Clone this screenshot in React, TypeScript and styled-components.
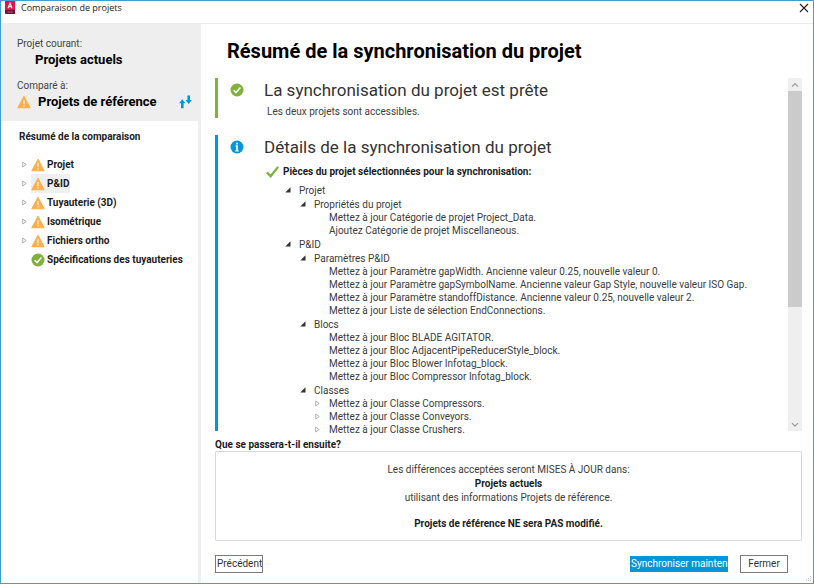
import React, { useState } from "react";
import styled, { createGlobalStyle, css } from "styled-components";

const GlobalStyle = createGlobalStyle`
  * { box-sizing: border-box; }
  body {
    margin: 0;
    background: #fff;
    color: #3c3c3c;
    font-family: "Roboto", "Noto Sans", sans-serif;
    font-size: 10px;
    line-height: 14px;
  }
  button { font: inherit; color: inherit; cursor: pointer; }
  h1, h2, h3, p, ul { margin: 0; padding: 0; }
  ul { list-style: none; }
`;

const Window = styled.div`
  display: flex;
  flex-direction: column;
  height: 100vh;
  border: 1px solid #3f9fd0;
  overflow: hidden;
`;

const TitleBar = styled.header`
  flex: none;
  display: flex;
  align-items: flex-start;
  justify-content: space-between;
  height: 23px;
  padding: 0 4px 0 3px;
  border-bottom: 1px solid #ececec;
`;

const TitleLabel = styled.div`
  display: flex;
  gap: 5px;
  color: #222;
  font-family: "Open Sans", sans-serif;
  font-size: 9px;
  line-height: 14px;
`;

const PlainButton = styled.button`
  display: flex;
  flex: none;
  padding: 0;
  border: 0;
  background: none;
`;

const CloseButton = styled(PlainButton)`
  padding: 2px 0;
`;

const Body = styled.div`
  flex: 1;
  min-height: 0;
  display: flex;
`;

const Sidebar = styled.aside`
  flex: none;
  width: 200px;
  border-right: 3px solid #efefef;
`;

const Comparison = styled.section`
  height: 97px;
  margin-right: -3px;
  padding: 13px 9px 0 16px;
  background: #eee;
`;

const Caption = styled.div`
  height: 14px;
  color: #444;
`;

const ProjectLine = styled.div<{ $last?: boolean }>`
  display: flex;
  align-items: center;
  gap: 7px;
  height: 18px;
  margin-bottom: ${(p) => (p.$last ? 0 : 10)}px;
  padding-left: ${(p) => (p.$last ? 0 : 18)}px;
  color: #000;
  font-size: 13px;
  font-weight: 700;
`;

const SwapButton = styled(PlainButton)`
  margin-left: auto;
`;

const SideHeading = styled.h2`
  width: 121px;
  margin: 8px 0 10px 18px;
  overflow: hidden;
  white-space: nowrap;
  color: #222;
  font-size: 10px;
  font-weight: 700;
  line-height: 16px;
`;

const SideItem = styled.li`
  display: flex;
  align-items: center;
  height: 19px;
  padding-left: 20px;
`;

const Toggle = styled(PlainButton)`
  width: 10px;
  padding-left: 1px;
`;

const SideLink = styled.button<{ $selected?: boolean }>`
  display: flex;
  align-items: center;
  gap: 2px;
  height: 19px;
  padding: 0 1px 0 0;
  border: 0;
  background: ${(p) => (p.$selected ? "#efefef" : "none")};
  color: #1c1c1c;
  font-weight: 700;
  white-space: nowrap;
`;

const Main = styled.main`
  flex: 1;
  min-width: 0;
  display: flex;
  flex-direction: column;
  padding: 0 11px 10px 14px;
`;

const PageTitle = styled.h1`
  flex: none;
  padding: 14px 12px;
  color: #000;
  font-size: 20px;
  font-weight: 700;
  line-height: 26px;
`;

const ScrollFrame = styled.div`
  flex: 1;
  min-height: 0;
  display: flex;
`;

const Report = styled.div`
  flex: 1;
  min-width: 0;
  display: flex;
  flex-direction: column;
  gap: 17px;
  overflow: clip;
  overflow-clip-margin: 6px;
`;

const Panel = styled.section<{ $tone: string; $fill?: boolean }>`
  display: flex;
  flex: ${(p) => (p.$fill ? "1" : "none")};
  min-height: 0;
  gap: 20px;
  padding-left: 12px;
  border-left: 3px solid ${(p) => p.$tone};

  > svg { flex: none; margin-top: 5px; }
`;

const PanelTitle = styled.h2`
  height: 26px;
  color: #333;
  font-size: 17px;
  font-weight: 400;
  line-height: 24px;
`;

const PanelNote = styled.p`
  height: 14px;
  padding-left: 3px;
  line-height: 16px;
`;

const SelectedHeading = styled.h3`
  display: flex;
  align-items: center;
  gap: 4px;
  height: 22px;
  padding-left: 2px;
  color: #1c1c1c;
  font-size: 10px;
  font-weight: 700;
`;

const Tree = styled.ul<{ $root?: boolean }>`
  padding-left: ${(p) => (p.$root ? 19 : 15)}px;
`;

const TreeRow = styled.div<{ $kind: "group" | "leaf" | "closed" }>`
  display: flex;
  align-items: center;
  white-space: nowrap;
  height: ${(p) => (p.$kind === "group" ? 14 : 13)}px;
  line-height: 13px;
  ${(p) => p.$kind === "leaf" && css`padding-left: 16px;`}

  > button { width: 16px; padding-left: 2px; }
`;

const Scrollbar = styled.div`
  flex: none;
  display: flex;
  flex-direction: column;
  width: 14px;
  background: #efefef;
`;

const ScrollButton = styled(PlainButton)`
  justify-content: center;
  align-items: center;
  height: 13px;
`;

const ScrollTrack = styled.div`
  flex: 1;
`;

const ScrollThumb = styled.div`
  height: 66%;
  background: #cbcbcb;
`;

const NextHeading = styled.h3`
  flex: none;
  height: 20px;
  color: #1c1c1c;
  font-size: 10px;
  font-weight: 700;
  line-height: 28px;
`;

const Outcome = styled.section`
  flex: none;
  margin-bottom: 14px;
  padding: 11px 10px 9px;
  border: 1px solid #d8d8d8;
  border-radius: 1px;
  text-align: center;

  strong { color: #1c1c1c; }
  p + p { margin-top: 12px; }
`;

const Actions = styled.footer`
  flex: none;
  display: flex;
  gap: 12px;
  padding-right: 14px;
`;

const ActionButton = styled.button<{ $primary?: boolean; $start?: boolean }>`
  width: ${(p) => (p.$primary ? 98 : 48)}px;
  height: ${(p) => (p.$primary ? 16 : 18)}px;
  align-self: center;
  margin-right: ${(p) => (p.$start ? "auto" : 0)};
  padding: 0 1px;
  overflow: hidden;
  white-space: nowrap;
  text-align: ${(p) => (p.$primary ? "left" : "center")};
  border: ${(p) => (p.$primary ? "0" : "1px solid #7a7a7a")};
  background: ${(p) => (p.$primary ? "#0696d7" : "#fff")};
  color: ${(p) => (p.$primary ? "#fff" : "#333")};
`;

const Grip = styled.div`
  position: absolute;
  right: 2px;
  bottom: 2px;
  display: flex;
`;

const Warning = () => (
  <svg width="14" height="14" viewBox="0 0 14 14" aria-hidden="true">
    <path d="M7 1.2 13.2 12.8H.8Z" fill="#fbb04e" stroke="#fbb04e" strokeLinejoin="round" />
    <path d="M7 5v4.2M7 10.2v1.4" stroke="#fff1dc" strokeWidth="1.3" />
  </svg>
);

const CheckBadge = ({ size = 14 }: { size?: number }) => (
  <svg width={size} height={size} viewBox="0 0 14 14" aria-hidden="true">
    <circle cx="7" cy="7" r="6.5" fill="#7fb13b" />
    <path d="m3.7 7.3 2.3 2.3 4.4-5" fill="none" stroke="#fff" strokeWidth="1.5" />
  </svg>
);

const InfoBadge = () => (
  <svg width="14" height="14" viewBox="0 0 14 14" aria-hidden="true">
    <circle cx="7" cy="7" r="6.5" fill="#0696d7" />
    <path d="M7 2.7v1.9M5.6 6H7v4.6M5.4 10.7h3.2" fill="none" stroke="#fff" strokeWidth="1.6" />
  </svg>
);

const CheckMark = () => (
  <svg width="13" height="12" viewBox="0 0 13 12" aria-hidden="true">
    <path d="M.9 6.4 4.6 10.2 12.1.9" fill="none" stroke="#7fb13b" strokeWidth="2.3" />
  </svg>
);

const Collapsed = () => (
  <svg width="5" height="7" viewBox="0 0 5 7" aria-hidden="true">
    <path d="M.7 1v5l3.5-2.5Z" fill="#fff" stroke="#a0a0a0" strokeWidth=".8" />
  </svg>
);

const Expanded = () => (
  <svg width="6" height="6" viewBox="0 0 6 6" aria-hidden="true">
    <path d="M5.5.3v5.2H.3Z" fill="#333" />
  </svg>
);

const Swap = () => (
  <svg width="13" height="14" viewBox="0 0 13 14" aria-hidden="true">
    <path d="M3.3 4.2 6.5 8.2H4.6v5H2v-5H.1Z" fill="#0696d7" />
    <path d="M9.7 9 6.5 5h1.9V.4H11V5h1.9Z" fill="#0696d7" />
  </svg>
);

const AppLogo = () => (
  <svg width="12" height="14" viewBox="0 0 12 14" aria-hidden="true">
    <path d="M1 0h10v13H2L1 12Z" fill="#e51050" />
    <path d="M1 9h10v4H2L1 12Z" fill="#7a0b35" />
    <path d="M4 7.2 6 2l2 5.2M4.7 5.6h2.6" fill="none" stroke="#fff" strokeWidth="1.1" />
    <path d="M3.5 11h5" stroke="#d77b9c" strokeWidth="1" strokeDasharray="1.3 .5" />
  </svg>
);

const CloseIcon = () => (
  <svg width="10" height="10" viewBox="0 0 10 10" aria-hidden="true">
    <path d="m1 1 8 8M9 1 1 9" stroke="#222" strokeWidth="1.1" />
  </svg>
);

const Chevron = ({ down }: { down?: boolean }) => (
  <svg width="8" height="6" viewBox="0 0 8 6" aria-hidden="true">
    <path d={down ? "m1 1.2 3 3 3-3" : "m1 4.6 3-3 3 3"} fill="none" stroke="#999" strokeWidth="1.2" />
  </svg>
);

type TreeNode = { label: string; closed?: boolean; children?: TreeNode[] };

const leaf = (label: string): TreeNode => ({ label });

const changes: TreeNode[] = [
  {
    label: "Projet",
    children: [
      {
        label: "Propriétés du projet",
        children: [
          leaf("Mettez à jour Catégorie de projet Project_Data."),
          leaf("Ajoutez Catégorie de projet Miscellaneous."),
        ],
      },
    ],
  },
  {
    label: "P&ID",
    children: [
      {
        label: "Paramètres P&ID",
        children: [
          leaf("Mettez à jour Paramètre gapWidth. Ancienne valeur 0.25, nouvelle valeur 0."),
          leaf("Mettez à jour Paramètre gapSymbolName. Ancienne valeur Gap Style, nouvelle valeur ISO Gap."),
          leaf("Mettez à jour Paramètre standoffDistance. Ancienne valeur 0.25, nouvelle valeur 2."),
          leaf("Mettez à jour Liste de sélection EndConnections."),
        ],
      },
      {
        label: "Blocs",
        children: [
          leaf("Mettez à jour Bloc BLADE AGITATOR."),
          leaf("Mettez à jour Bloc AdjacentPipeReducerStyle_block."),
          leaf("Mettez à jour Bloc Blower Infotag_block."),
          leaf("Mettez à jour Bloc Compressor Infotag_block."),
        ],
      },
      {
        label: "Classes",
        children: [
          { label: "Mettez à jour Classe Compressors.", closed: true },
          { label: "Mettez à jour Classe Conveyors.", closed: true },
          { label: "Mettez à jour Classe Crushers.", closed: true },
        ],
      },
    ],
  },
];

const Branch = ({ node }: { node: TreeNode }) => {
  const [open, setOpen] = useState(!node.closed);
  const kind = node.children ? "group" : node.closed ? "closed" : "leaf";
  return (
    <li>
      <TreeRow $kind={kind}>
        {kind !== "leaf" && (
          <PlainButton aria-label={node.label} aria-expanded={open} onClick={() => setOpen(!open)}>
            {open ? <Expanded /> : <Collapsed />}
          </PlainButton>
        )}
        {node.label}
      </TreeRow>
      {open && node.children && (
        <Tree>
          {node.children.map((child) => (
            <Branch key={child.label} node={child} />
          ))}
        </Tree>
      )}
    </li>
  );
};

const categories = ["Projet", "P&ID", "Tuyauterie (3D)", "Isométrique", "Fichiers ortho"];
const specs = "Spécifications des tuyauteries";

export default function App() {
  const [selected, setSelected] = useState("P&ID");
  return (
    <>
      <GlobalStyle />
      <Window>
        <TitleBar>
          <TitleLabel>
            <AppLogo />
            Comparaison de projets
          </TitleLabel>
          <CloseButton aria-label="Fermer la fenêtre">
            <CloseIcon />
          </CloseButton>
        </TitleBar>
        <Body>
          <Sidebar>
            <Comparison>
              <Caption>Projet courant:</Caption>
              <ProjectLine>Projets actuels</ProjectLine>
              <Caption>Comparé à:</Caption>
              <ProjectLine $last>
                <Warning />
                Projets de référence
                <SwapButton aria-label="Inverser les projets">
                  <Swap />
                </SwapButton>
              </ProjectLine>
            </Comparison>
            <SideHeading>Résumé de la comparaison</SideHeading>
            <ul>
              {[...categories, specs].map((name) => (
                <SideItem key={name}>
                  {name === specs ? (
                    <Toggle as="span" />
                  ) : (
                    <Toggle aria-label={`Développer ${name}`} aria-expanded={false}>
                      <Collapsed />
                    </Toggle>
                  )}
                  <SideLink $selected={name === selected} onClick={() => setSelected(name)}>
                    {name === specs ? <CheckBadge /> : <Warning />}
                    {name}
                  </SideLink>
                </SideItem>
              ))}
            </ul>
          </Sidebar>
          <Main>
            <PageTitle>Résumé de la synchronisation du projet</PageTitle>
            <ScrollFrame>
              <Report>
                <Panel $tone="#7fb13b">
                  <CheckBadge />
                  <div>
                    <PanelTitle>La synchronisation du projet est prête</PanelTitle>
                    <PanelNote>Les deux projets sont accessibles.</PanelNote>
                  </div>
                </Panel>
                <Panel $tone="#0696d7" $fill>
                  <InfoBadge />
                  <div>
                    <PanelTitle>Détails de la synchronisation du projet</PanelTitle>
                    <SelectedHeading>
                      <CheckMark />
                      Pièces du projet sélectionnées pour la synchronisation:
                    </SelectedHeading>
                    <Tree $root>
                      {changes.map((node) => (
                        <Branch key={node.label} node={node} />
                      ))}
                    </Tree>
                  </div>
                </Panel>
              </Report>
              <Scrollbar>
                <ScrollButton aria-label="Défiler vers le haut">
                  <Chevron />
                </ScrollButton>
                <ScrollTrack>
                  <ScrollThumb />
                </ScrollTrack>
                <ScrollButton aria-label="Défiler vers le bas">
                  <Chevron down />
                </ScrollButton>
              </Scrollbar>
            </ScrollFrame>
            <NextHeading>Que se passera-t-il ensuite?</NextHeading>
            <Outcome>
              <p>
                Les différences acceptées seront MISES À JOUR dans:
                <br />
                <strong>Projets actuels</strong>
                <br />
                utilisant des informations Projets de référence.
              </p>
              <p>
                <strong>Projets de référence NE sera PAS modifié.</strong>
              </p>
            </Outcome>
            <Actions>
              <ActionButton $start>Précédent</ActionButton>
              <ActionButton $primary>Synchroniser maintenant</ActionButton>
              <ActionButton>Fermer</ActionButton>
            </Actions>
          </Main>
        </Body>
        <Grip>
          <svg width="6" height="6" viewBox="0 0 6 6" aria-hidden="true">
            <path d="M4 0h1v1H4zM4 2h1v1H4zM2 2h1v1H2zM4 4h1v1H4zM2 4h1v1H2zM0 4h1v1H0z" fill="#c4c4c4" />
          </svg>
        </Grip>
      </Window>
    </>
  );
}
